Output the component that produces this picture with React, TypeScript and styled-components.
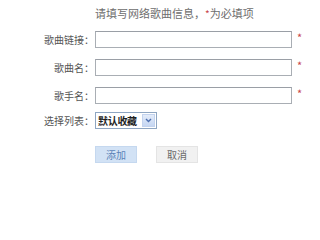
import React, {FC} from 'react';
import styled, {createGlobalStyle} from 'styled-components';

const GlobalStyle = createGlobalStyle`
  html, body {
    margin: 0;
    padding: 0;
    background: #ffffff;
  }

  body {
    font-family: "Noto Sans CJK SC", "Liberation Sans", sans-serif;
    color: #555;
  }
`;

const Page = styled.div`
  width: 320px;
  height: 200px;
  overflow: hidden;
  background: #fff;
`;

const Title = styled.div`
  height: 25px;
  padding: 2px 0 0 95px;
  box-sizing: border-box;
  font-size: 11px;
  line-height: 23px;
  color: #6d6d6d;
  white-space: nowrap;
`;

const Star = styled.span`
  color: #c8454a;
  font-size: 10px;
`;

const Form = styled.div`
  display: grid;
  grid-template-columns: 92px 197px 20px;
  column-gap: 3px;
  align-items: center;
`;

const Row = styled.div<{ $height: number }>`
  display: contents;

  & > * {
    height: ${p => p.$height}px;
  }
`;

const Label = styled.label`
  display: flex;
  align-items: center;
  justify-content: flex-end;
  margin-right: -2px;
  font-size: 10px;
  color: #555;
  white-space: nowrap;
`;

const Field = styled.div`
  display: flex;
  align-items: center;
`;

const TextInput = styled.input`
  box-sizing: border-box;
  width: 197px;
  height: 17px;
  border: 1px solid #a9aeb4;
  border-top-color: #9a9fa6;
  background: #fff;
  padding: 0 3px;
  outline: none;
`;

const Required = styled.span`
  display: flex;
  align-items: center;
  padding-left: 2px;
  color: #c8454a;
  font-size: 11px;
  margin-top: -4px;
`;

const Select = styled.div`
  box-sizing: border-box;
  display: flex;
  align-items: center;
  width: 62px;
  height: 17px;
  border: 1px solid #8fa6c2;
  background: #fff;
  padding: 1px 1px 1px 2px;
`;

const SelectText = styled.span`
  flex: 1;
  font-size: 10px;
  font-weight: 700;
  color: #1e1e1e;
  line-height: 13px;
  white-space: nowrap;
  letter-spacing: -0.3px;
`;

const ArrowBox = styled.span`
  display: flex;
  align-items: center;
  justify-content: center;
  width: 13px;
  height: 13px;
  background: linear-gradient(#e4ecfa, #c5d6f2);
  border: 1px solid #c3d3ee;
  box-sizing: border-box;
`;

const Actions = styled.div`
  display: flex;
  gap: 19px;
  padding: 14px 0 0 95px;
`;

const Button = styled.button<{ $primary?: boolean }>`
  width: 42px;
  height: 17px;
  padding: 0;
  border: 1px solid ${p => (p.$primary ? '#c5d8ef' : '#e4e4e4')};
  background: ${p => (p.$primary ? '#d2e2f5' : '#f1f1f1')};
  color: ${p => (p.$primary ? '#5b82b8' : '#6a6a6a')};
  font-family: "Noto Sans CJK SC", "Liberation Sans", sans-serif;
  font-size: 10px;
  line-height: 15px;
  cursor: pointer;
`;

const fields = ['歌曲链接：', '歌曲名：', '歌手名：'];

const App: FC = () => {
    return (
        <Page>
            <GlobalStyle/>
            <Title>
                请填写网络歌曲信息，<Star>*</Star>为必填项
            </Title>
            <Form>
                {fields.map(label => (
                    <Row key={label} $height={28}>
                        <Label>{label}</Label>
                        <Field><TextInput type="text"/></Field>
                        <Required>*</Required>
                    </Row>
                ))}
                <Row $height={23}>
                    <Label>选择列表：</Label>
                    <Field>
                        <Select>
                            <SelectText>默认收藏</SelectText>
                            <ArrowBox>
                                <svg width="7" height="5" viewBox="0 0 7 5">
                                    <path d="M1 1 L3.5 3.5 L6 1" fill="none" stroke="#4d6fb0" strokeWidth="1.4"/>
                                </svg>
                            </ArrowBox>
                        </Select>
                    </Field>
                    <span/>
                </Row>
            </Form>
            <Actions>
                <Button $primary>添加</Button>
                <Button>取消</Button>
            </Actions>
        </Page>
    );
};

export default App;
